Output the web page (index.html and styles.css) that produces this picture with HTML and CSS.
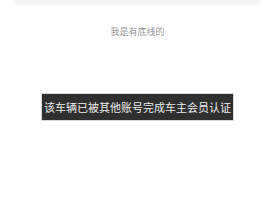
FILE: index.html
```html
<!DOCTYPE html>
<html lang="zh-CN">
<head>
  <meta charset="UTF-8">
  <title>我的车辆</title>
  <meta name="viewport" content="width=device-width, initial-scale=1.0">
  <link rel="stylesheet" href="styles.css">
</head>
<body>
  <div class="page">
    <div class="card"></div>
    <p class="bottom-line">我是有底线的</p>
  </div>

  <!-- Toast -->
  <div class="toast">该车辆已被其他账号完成车主会员认证</div>
</body>
</html>
```

FILE: styles.css
```css
* {
  box-sizing: border-box;
}
body {
  margin: 0;
  padding: 0;
  background-color: #ffffff;
  font-family: "Noto Sans CJK SC", "Noto Sans", sans-serif;
  width: 275px;
  height: 214px;
  overflow: hidden;
  position: relative;
}
.page {
  padding: 0 14px;
}
.card {
  height: 4px;
  background-color: #f6f6f6;
  border-radius: 0 0 4px 4px;
  box-shadow: 0 1px 2px rgba(0,0,0,0.04);
}
.bottom-line {
  margin: 22px 0 0;
  text-align: center;
  font-size: 9px;
  line-height: 12px;
  color: #9a9a9a;
}
.toast {
  position: absolute;
  left: 41px;
  top: 93px;
  width: 193px;
  height: 28px;
  background-color: #2f2f2f;
  border: 1px solid #d8d8d8;
  color: #ececec;
  font-size: 11px;
  line-height: 26px;
  text-align: center;
  white-space: nowrap;
}
```
